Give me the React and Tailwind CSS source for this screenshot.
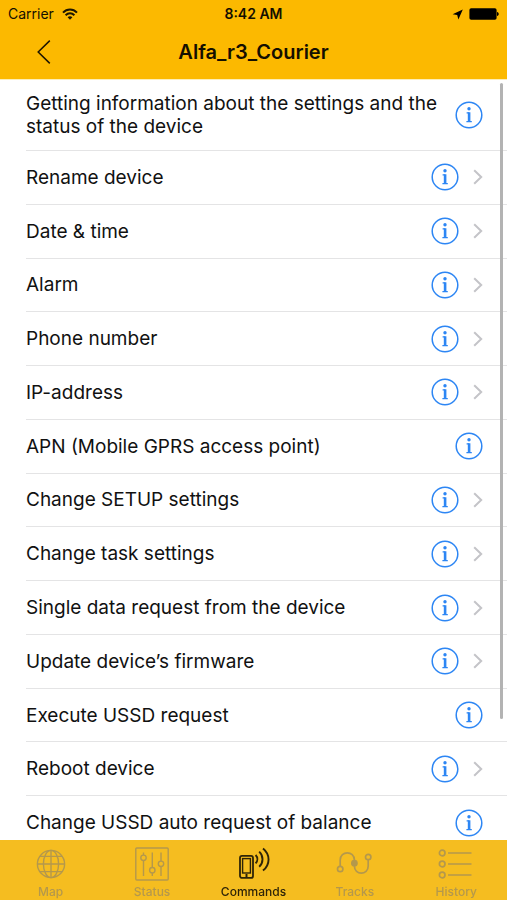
import React from 'react';

const commands = [
  { label: 'Rename device', nested: true },
  { label: 'Date & time', nested: true },
  { label: 'Alarm', nested: true },
  { label: 'Phone number', nested: true },
  { label: 'IP-address', nested: true },
  { label: 'APN (Mobile GPRS access point)', nested: false },
  { label: 'Change SETUP settings', nested: true },
  { label: 'Change task settings', nested: true },
  { label: 'Single data request from the device', nested: true },
  { label: 'Update device’s firmware', nested: true },
  { label: 'Execute USSD request', nested: false },
  { label: 'Reboot device', nested: true },
  { label: 'Change USSD auto request of balance', nested: false },
];

function InfoIcon() {
  return (
    <svg viewBox="0 0 28 28" className="h-7 w-7" fill="none" aria-hidden="true">
      <circle cx="14" cy="14" r="12.8" stroke="#2d86f4" strokeWidth="1.5" />
      <circle cx="14" cy="7.8" r="1.7" fill="#2d86f4" />
      <path d="M11.6 11.9H14.3M11.4 20.7H16.8" stroke="#2d86f4" strokeWidth="1.2" />
      <path d="M14.1 11.3V21" stroke="#2d86f4" strokeWidth="2.6" />
    </svg>
  );
}

function CommandRow({ label, nested, first }) {
  return (
    <li
      className={
        first
          ? 'ml-[26px] flex min-h-[71px] items-center border-b border-[#e4e4e5] pr-6'
          : 'ml-[26px] flex min-h-[53px] flex-1 items-center border-b border-[#e4e4e5] pr-6'
      }
    >
      <button type="button" className="flex-1 text-left text-[19px] leading-[23px]">
        {label}
      </button>
      <button type="button" aria-label={`About ${label}`} className="shrink-0">
        <InfoIcon />
      </button>
      {nested && (
        <svg viewBox="0 0 10 16" className="ml-[14px] h-4 w-[10px] shrink-0" fill="none" aria-hidden="true">
          <path d="M1.2 1.2L8.2 8L1.2 14.8" stroke="#c4c4c8" strokeWidth="2" />
        </svg>
      )}
    </li>
  );
}

function StatusBar() {
  return (
    <div className="grid h-7 grid-cols-3 items-center px-2 text-[14px] leading-4">
      <div className="flex items-center gap-2">
        <span>Carrier</span>
        <svg viewBox="0 0 16 12" className="h-3 w-4" fill="none" stroke="#1d1500" strokeWidth="2" aria-hidden="true">
          <path d="M1 4.6C5 0.4 11 0.4 15 4.6" />
          <path d="M3.6 7.3C6.2 4.7 9.8 4.7 12.4 7.3" />
          <path d="M5.6 9.2C7 7.9 9 7.9 10.4 9.2L8 11.7Z" fill="#1d1500" stroke="none" />
        </svg>
      </div>
      <span className="text-center font-semibold">8:42 AM</span>
      <div className="flex items-center justify-end gap-[6px]">
        <svg viewBox="0 0 11 11" className="h-[11px] w-[11px]" aria-hidden="true">
          <path d="M10.8 0.4L6.4 10.4L5.2 6L0.6 5.2Z" fill="#000" />
        </svg>
        <svg viewBox="0 0 30 12" className="h-3 w-[30px]" aria-hidden="true">
          <rect x="0.4" y="0.3" width="27.2" height="11.4" rx="1.8" fill="#000" />
          <path d="M28 4C30.3 4.4 30.3 7.6 28 8Z" fill="#000" />
        </svg>
      </div>
    </div>
  );
}

function GlobeIcon() {
  return (
    <>
      <circle cx="20" cy="18" r="13.6" />
      <ellipse cx="20" cy="18" rx="7.6" ry="13.6" />
      <path d="M20 4.4V31.6M6.4 18H33.6M9 10.4H31M9 25.6H31" />
    </>
  );
}

function SlidersIcon() {
  return (
    <>
      <rect x="3.8" y="2" width="32.4" height="32" rx="1" />
      <path d="M11.5 6.5V9M11.5 14.5V30M20.3 6.5V21.5M20.3 27V30M29 6.5V15M29 20.5V30" />
      <circle cx="11.5" cy="11.8" r="2.7" />
      <circle cx="20.3" cy="24.2" r="2.7" />
      <circle cx="29" cy="17.8" r="2.7" />
    </>
  );
}

function PhoneSignalIcon() {
  return (
    <>
      <rect x="7" y="9.9" width="13" height="22" rx="2" strokeWidth="1.8" />
      <rect x="9.6" y="12.6" width="7.8" height="14.4" />
      <path d="M13.5 28V31" strokeWidth="2" />
      <path
        d="M22.6 9C24.9 11.4 24.9 15 22.6 17.4M26.2 5.6C30.6 9.6 30.6 16.8 26.2 20.8M30 2.4C37.4 8.4 37.4 18.4 30 24.6"
        strokeWidth="1.9"
      />
    </>
  );
}

function RouteIcon() {
  return (
    <>
      <path d="M5.2 20.2V14C5.2 4.4 19.4 4.4 19.4 14V20C19.4 29.6 33.2 29.6 33.2 20V13.8" strokeWidth="1.7" />
      <circle cx="5.2" cy="23" r="2.7" strokeWidth="1.7" />
      <circle cx="19.4" cy="17.2" r="2.7" fill="currentColor" />
      <circle cx="33.2" cy="11" r="2.7" strokeWidth="1.7" />
    </>
  );
}

function ListIcon() {
  return (
    <>
      <circle cx="6.2" cy="7" r="2.8" strokeWidth="1.7" />
      <circle cx="6.2" cy="18" r="2.8" strokeWidth="1.7" />
      <circle cx="6.2" cy="29" r="2.8" strokeWidth="1.7" />
      <path d="M12 7H35.5M12 18H35.5M12 29H35.5" />
    </>
  );
}

const tabs = [
  { label: 'Map', Icon: GlobeIcon },
  { label: 'Status', Icon: SlidersIcon },
  { label: 'Commands', Icon: PhoneSignalIcon, active: true },
  { label: 'Tracks', Icon: RouteIcon },
  { label: 'History', Icon: ListIcon },
];

function TabBar() {
  return (
    <nav className="sticky bottom-0 z-10 -mt-[10px] grid h-[60px] grid-cols-5 bg-[#f5bd20]">
      {tabs.map(({ label, Icon, active }) => (
        <a
          key={label}
          href={`#${label.toLowerCase()}`}
          aria-current={active ? 'page' : undefined}
          className={
            active
              ? 'flex flex-col items-center pt-[6px] text-[12px] leading-[19px] font-medium text-[#2e2408]'
              : 'flex flex-col items-center pt-[6px] text-[12px] leading-[19px] font-medium text-[#b4984c]'
          }
        >
          <svg viewBox="0 0 40 36" className="h-9 w-10 shrink-0" fill="none" stroke="currentColor" strokeWidth="1.4" aria-hidden="true">
            <Icon />
          </svg>
          {label}
        </a>
      ))}
    </nav>
  );
}

export default function App() {
  return (
    <div className="flex min-h-screen flex-col bg-white font-['Inter',sans-serif] text-[#111111]">
      <header className="h-20 shrink-0 border-b border-[#fdeeb8] bg-[#fcb900] text-[#140f00]">
        <StatusBar />
        <div className="grid grid-cols-[48px_1fr_48px] items-center px-5">
          <button type="button" aria-label="Back" className="flex h-12 items-center justify-center">
            <svg viewBox="0 0 14 26" className="h-[26px] w-[14px]" fill="none" aria-hidden="true">
              <path d="M12.8 1.6L1.2 13L12.8 24.4" stroke="#1d1500" strokeWidth="1.5" />
            </svg>
          </button>
          <h1 className="text-center text-[20px] leading-6 font-semibold">Alfa_r3_Courier</h1>
        </div>
      </header>

      <main className="relative flex flex-1 flex-col">
        <ul className="flex flex-1 flex-col">
          <CommandRow label="Getting information about the settings and the status of the device" first />
          {commands.map((command) => (
            <CommandRow key={command.label} label={command.label} nested={command.nested} />
          ))}
        </ul>
        {/* scroll indicator */}
        <div className="absolute top-[3px] right-1 bottom-[131px] w-[3px] rounded-full bg-[#b3b3b3]" />
      </main>

      <TabBar />
    </div>
  );
}
